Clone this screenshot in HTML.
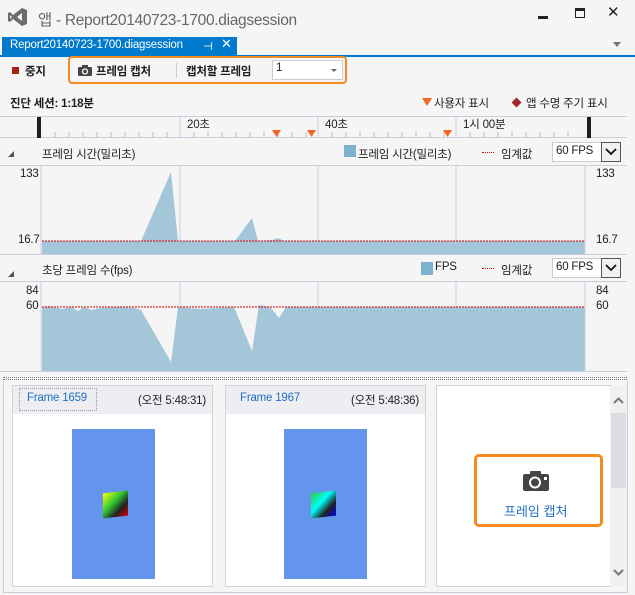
<!DOCTYPE html>
<html><head><meta charset="utf-8"><style>
*{margin:0;padding:0;box-sizing:border-box}
body{width:635px;height:595px;overflow:hidden;background:#f5f5f5;font-family:"Liberation Sans","Noto Sans CJK KR",sans-serif;position:relative;color:#1e1e1e}
.a{position:absolute;white-space:nowrap}
.f12{font-size:11.5px;letter-spacing:-0.2px}
.b{font-weight:bold}
.dd{position:absolute;width:20px;height:20px;border:1px solid #555;background:#f0f0f0}
</style></head><body>
<!-- title -->
<svg class="a" style="left:8px;top:7px" width="20" height="20" viewBox="0 0 20 20"><path d="M14 1 L19 3 V17 L14 19 L5 12 L2 15 L0 14 V6 L2 5 L5 8 Z M14 6 L9 10 L14 14 Z M2 8 V12 L4 10 Z" fill="#6c6c6c" fill-rule="evenodd"/></svg>
<div class="a" style="left:38px;top:8px;font-size:15.5px;color:#666;letter-spacing:-0.3px">앱 - Report20140723-1700.diagsession</div>
<div class="a" style="left:538px;top:16px;width:10px;height:3px;background:#222"></div>
<div class="a" style="left:575px;top:8px;width:10px;height:10px;border:1.5px solid #222;border-top-width:3px"></div>
<div class="a" style="left:607px;top:3px;font-size:15px;color:#222">✕</div>
<!-- tab -->
<div class="a" style="left:2px;top:37px;width:235px;height:19px;background:#007acc"></div>
<div class="a f12" style="left:10px;top:39px;color:#fff">Report20140723-1700.diagsession</div>
<div class="a f12" style="left:203px;top:39px;color:#fff">⊣</div>
<div class="a" style="left:221px;top:36px;color:#fff;font-size:13px">✕</div>
<div class="a" style="left:0;top:55px;width:635px;height:2px;background:#007acc"></div>
<div class="a" style="left:613px;top:42px;border:4px solid transparent;border-top:5px solid #777"></div>
<!-- toolbar -->
<div class="a" style="left:12px;top:67px;width:7px;height:7px;background:#a1260d"></div>
<div class="a f12 b" style="left:25px;top:63px">중지</div>
<div class="a" style="left:68px;top:56px;width:279px;height:28px;border:2px solid #f58a1f;border-radius:4px"></div>
<svg class="a" style="left:78px;top:65px" width="14" height="11" viewBox="0 0 14 11"><rect x="0" y="2" width="14" height="9" rx="1.5" fill="#444"/><rect x="4" y="0" width="6" height="3" fill="#444"/><circle cx="7" cy="6.5" r="2.5" fill="none" stroke="#fff" stroke-width="1.3"/></svg>
<div class="a f12 b" style="left:96px;top:63px">프레임 캡처</div>
<div class="a" style="left:176px;top:63px;width:1px;height:15px;background:#ccc"></div>
<div class="a f12 b" style="left:186px;top:63px">캡처할 프레임</div>
<div class="a" style="left:272px;top:60px;width:71px;height:20px;background:#fff;border:1px solid #ccc"></div>
<div class="a f12" style="left:276px;top:62px">1</div>
<div class="a" style="left:331px;top:69px;border:3px solid transparent;border-top:3px solid #666"></div>
<!-- session -->
<div class="a f12 b" style="left:10px;top:95px">진단 세션: 1:18분</div>
<div class="a" style="left:422px;top:98px;border:5px solid transparent;border-top:8px solid #f26522;border-bottom:0"></div>
<div class="a f12" style="left:434px;top:95px">사용자 표시</div>
<div class="a" style="left:513px;top:99px;width:7px;height:7px;background:#a4262c;transform:rotate(45deg)"></div>
<div class="a f12" style="left:526px;top:95px">앱 수명 주기 표시</div>
<!-- ruler -->
<div class="a" style="left:0;top:116px;width:627px;height:22px;border-top:1px solid #cdcde0;border-bottom:1px solid #cdcde0"></div>
<svg class="a" style="left:0;top:116px" width="627" height="22">
<g stroke="#bbb"><path d="M55 16V21M69 16V21M83 16V21M97 16V21M111 16V21M125 16V21M139 16V21M153 16V21M167 16V21M194 16V21M208 16V21M222 16V21M236 16V21M250 16V21M264 16V21M278 16V21M292 16V21M306 16V21M332 16V21M346 16V21M360 16V21M374 16V21M388 16V21M402 16V21M416 16V21M430 16V21M444 16V21M470 16V21M484 16V21M498 16V21M512 16V21M526 16V21M540 16V21M554 16V21M568 16V21"/>
<path d="M180 0V22M318 0V22M456 0V22" stroke="#cdcde0"/></g>
<rect x="37" y="1" width="4" height="21" fill="#1e1e1e"/><rect x="587" y="1" width="4" height="21" fill="#1e1e1e"/>
<path d="M272 14h9l-4.5 7z M307 14h9l-4.5 7z M443 14h9l-4.5 7z" fill="#f26522"/></svg>
<div class="a f12" style="left:187px;top:116px">20초</div>
<div class="a f12" style="left:325px;top:116px">40초</div>
<div class="a f12" style="left:463px;top:116px">1시 00분</div>
<!-- chart1 header -->
<div class="a" style="left:8px;top:151px;border-left:6px solid transparent;border-bottom:6px solid #555"></div>
<div class="a f12" style="left:42px;top:146px">프레임 시간(밀리초)</div>
<div class="a" style="left:344px;top:145px;width:12px;height:12px;background:#7cb2cf"></div>
<div class="a f12" style="left:358px;top:146px">프레임 시간(밀리초)</div>
<div class="a" style="left:482px;top:152px;width:12px;border-top:1px dotted #d00"></div>
<div class="a f12" style="left:501px;top:146px">임계값</div>
<div class="a" style="left:552px;top:142px;width:69px;height:20px;background:#fff;border:1px solid #ccc"></div>
<div class="a f12" style="left:556px;top:145px">60 FPS</div>
<div class="dd" style="left:601px;top:142px"><svg width="18" height="18"><path d="M4 6l5 5 5-5" fill="none" stroke="#111" stroke-width="1.8"/></svg></div>
<!-- chart1 -->
<div class="a" style="left:0;top:165px;width:627px;height:90px;border-top:1px solid #cdcde0;border-bottom:1px solid #cdcde0"></div>
<svg class="a" style="left:0;top:166px" width="627" height="88">
<path d="M180 0V88M318 0V88M456 0V88" stroke="#cdcde0"/>
<path d="M42 75 L141 75 L171 6 L178 75 L235 75 L252 52 L258 75 L272 74 L278 72 L284 75 L585 75 V88 H42Z" fill="#a3c6d8"/>
<path d="M42 75H585" stroke="#d00" stroke-dasharray="2,1"/>
<path d="M41 0V88M585 0V88" stroke="#cdcde0"/></svg>
<div class="a f12" style="left:20px;top:168px">133</div>
<div class="a f12" style="left:596px;top:168px">133</div>
<div class="a f12" style="left:18px;top:234px">16.7</div>
<div class="a f12" style="left:596px;top:234px">16.7</div>
<!-- chart2 header -->
<div class="a" style="left:8px;top:271px;border-left:6px solid transparent;border-bottom:6px solid #555"></div>
<div class="a f12" style="left:42px;top:262px">초당 프레임 수(fps)</div>
<div class="a" style="left:421px;top:262px;width:12px;height:13px;background:#7cb2cf"></div>
<div class="a f12" style="left:435px;top:261px">FPS</div>
<div class="a" style="left:482px;top:268px;width:12px;border-top:1px dotted #d00"></div>
<div class="a f12" style="left:501px;top:262px">임계값</div>
<div class="a" style="left:552px;top:258px;width:69px;height:20px;background:#fff;border:1px solid #ccc"></div>
<div class="a f12" style="left:556px;top:261px">60 FPS</div>
<div class="dd" style="left:601px;top:258px"><svg width="18" height="18"><path d="M4 6l5 5 5-5" fill="none" stroke="#111" stroke-width="1.8"/></svg></div>
<!-- chart2 -->
<div class="a" style="left:0;top:281px;width:627px;height:91px;border-top:1px solid #cdcde0;border-bottom:1px solid #cdcde0"></div>
<svg class="a" style="left:0;top:282px" width="627" height="89">
<path d="M180 0V89M318 0V89M456 0V89" stroke="#cdcde0"/>
<path d="M42 25 L50 24 L62 27 L72 25 L78 29 L84 25 L92 28 L100 26 L120 25 L135 26 L141 28 L171 80 L178 25 L200 27 L234 25 L252 69 L259 23 L270 25 L279 36 L286 25 L585 25 V89 H42Z" fill="#a3c6d8"/>
<path d="M42 25H585" stroke="#d00" stroke-dasharray="2,1"/>
<path d="M41 0V89M585 0V89" stroke="#cdcde0"/></svg>
<div class="a f12" style="left:26px;top:285px">84</div>
<div class="a f12" style="left:596px;top:285px">84</div>
<div class="a f12" style="left:26px;top:300px">60</div>
<div class="a f12" style="left:596px;top:300px">60</div>
<!-- splitter -->
<div class="a" style="left:3px;top:377px;width:624px;height:3px;border-top:1px dotted #777;border-bottom:1px dotted #777"></div>
<div class="a" style="left:3px;top:381px;width:625px;height:212px;border:1px solid #cdcde0;border-top:0"></div>
<!-- cards -->
<div class="a" style="left:12px;top:385px;width:201px;height:202px;background:#fff;border:1px solid #d4d4d4"></div>
<div class="a" style="left:13px;top:386px;width:199px;height:28px;background:#eeeef2"></div>
<div class="a" style="left:19px;top:388px;width:78px;height:23px;border:1px dotted #999"></div>
<div class="a f12" style="left:27px;top:392px;color:#1e6fc5">Frame 1659</div>
<div class="a f12" style="left:138px;top:392px">(오전 5:48:31)</div>
<div class="a" style="left:72px;top:429px;width:83px;height:150px;background:#6495ed"></div>
<div class="a" style="left:103px;top:492px;width:25px;height:25px;background:linear-gradient(135deg,#ff0 0%,#3c3 40%,#222 70%,#d00 100%);transform:skewY(-6deg)"></div>
<div class="a" style="left:225px;top:385px;width:201px;height:202px;background:#fff;border:1px solid #d4d4d4"></div>
<div class="a" style="left:226px;top:386px;width:199px;height:28px;background:#eeeef2"></div>
<div class="a f12" style="left:240px;top:392px;color:#1e6fc5">Frame 1967</div>
<div class="a f12" style="left:351px;top:392px">(오전 5:48:36)</div>
<div class="a" style="left:284px;top:429px;width:83px;height:150px;background:#6495ed"></div>
<div class="a" style="left:311px;top:492px;width:25px;height:25px;background:linear-gradient(135deg,#3c3 0%,#0ff 40%,#222 70%,#00d 100%);transform:skewY(-6deg)"></div>
<div class="a" style="left:436px;top:385px;width:175px;height:202px;background:#fff;border:1px solid #d4d4d4;border-right:0"></div>
<div class="a" style="left:474px;top:454px;width:129px;height:73px;border:3px solid #f58a1f;border-radius:5px;background:#fff"></div>
<svg class="a" style="left:523px;top:471px" width="26" height="20" viewBox="0 0 26 20"><rect x="0" y="3" width="26" height="17" rx="2" fill="#444"/><rect x="7" y="0" width="11" height="4" rx="1" fill="#444"/><circle cx="12" cy="11.5" r="5" fill="none" stroke="#fff" stroke-width="2"/><rect x="21" y="6" width="3" height="3" fill="#fff"/></svg>
<div class="a" style="left:504px;top:501px;font-size:13px;color:#1e6fc5">프레임 캡처</div>
<!-- scrollbar -->
<div class="a" style="left:610px;top:386px;width:17px;height:200px;background:#f0f0f0"></div>
<div class="a" style="left:611px;top:413px;width:15px;height:75px;background:#dcdce4"></div>
<svg class="a" style="left:611px;top:396px" width="15" height="10"><path d="M3 7l4.5-4.5L12 7" fill="none" stroke="#777" stroke-width="2"/></svg>
<svg class="a" style="left:611px;top:567px" width="15" height="10"><path d="M3 3l4.5 4.5L12 3" fill="none" stroke="#777" stroke-width="2"/></svg>
</body></html>
